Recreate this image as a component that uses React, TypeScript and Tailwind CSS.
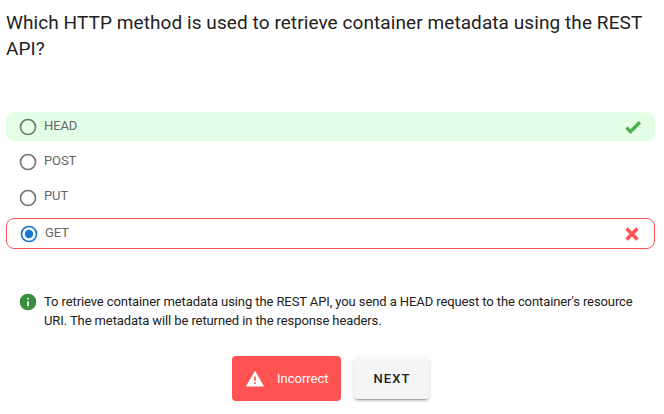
type IconProps = { d: string; className?: string };

const ICONS = {
  radioOff:
    "M12,20A8,8 0 0,1 4,12A8,8 0 0,1 12,4A8,8 0 0,1 20,12A8,8 0 0,1 12,20M12,2A10,10 0 0,0 2,12A10,10 0 0,0 12,22A10,10 0 0,0 22,12A10,10 0 0,0 12,2Z",
  radioOn:
    "M12,20A8,8 0 0,1 4,12A8,8 0 0,1 12,4A8,8 0 0,1 20,12A8,8 0 0,1 12,20M12,2A10,10 0 0,0 2,12A10,10 0 0,0 12,22A10,10 0 0,0 22,12A10,10 0 0,0 12,2M12,7A5,5 0 0,0 7,12A5,5 0 0,0 12,17A5,5 0 0,0 17,12A5,5 0 0,0 12,7Z",
  check: "M9,20.42L2.79,14.21L5.62,11.38L9,14.77L18.88,4.88L21.71,7.71L9,20.42Z",
  close:
    "M20 6.91L17.09 4L12 9.09L6.91 4L4 6.91L9.09 12L4 17.09L6.91 20L12 14.91L17.09 20L20 17.09L14.91 12L20 6.91Z",
  alert: "M13 14H11V9H13M13 18H11V16H13M1 21H23L12 2L1 21Z",
  info: "M13,9H11V7H13M13,17H11V11H13M12,2A10,10 0 0,0 2,12A10,10 0 0,0 12,22A10,10 0 0,0 22,12A10,10 0 0,0 12,2Z",
};

function Icon({ d, className = "" }: IconProps) {
  return (
    <svg viewBox="0 0 24 24" className={`size-5 shrink-0 fill-current ${className}`}>
      <path d={d} />
    </svg>
  );
}

type OptionProps = {
  label: string;
  className: string;
  labelClass?: string;
  selected?: boolean;
  mark?: "check" | "close";
};

function Option({ label, className, labelClass = "", selected, mark }: OptionProps) {
  return (
    <label className={`flex items-start rounded-lg pl-3 ${className}`}>
      <Icon
        d={selected ? ICONS.radioOn : ICONS.radioOff}
        className={selected ? "text-[#1976d2]" : "text-[#757575]"}
      />
      <span className={`ml-1.5 text-[13px] leading-[18px] tracking-[-0.1px] text-[#666666] ${labelClass}`}>
        {label}
      </span>
      {mark && (
        <Icon
          d={ICONS[mark]}
          className={mark === "check" ? "ml-auto text-[#4caf50]" : "ml-auto text-[#ff5252]"}
        />
      )}
    </label>
  );
}

export default function App() {
  return (
    <main className="h-[414px] w-[664px] overflow-hidden bg-white pr-[9px] pl-1.5 font-['Roboto',sans-serif] text-[#212121]">
      <h1 className="h-28 pt-[10px] text-[19px] leading-[26px] tracking-[0.08px]">
        Which HTTP method is used to retrieve container metadata using the REST API?
      </h1>

      <div className="flex flex-col">
        <Option label="HEAD" mark="check" className="h-[29px] bg-[#e3ffe6] pt-[5px] pr-3" />
        <Option label="POST" className="h-[35px] pt-[11px]" />
        <Option label="PUT" className="h-[42px] pt-3" labelClass="-mt-px" />
        <Option
          label="GET"
          selected
          mark="close"
          className="h-[31px] border border-[#ff5252] pt-[5px] pr-3"
        />
      </div>

      <div className="flex h-[107px] pt-[43px] pl-3">
        <Icon d={ICONS.info} className="text-[#388e3c]" />
        <p className="ml-1.5 w-[600px] text-[13px] leading-[19px] tracking-[-0.095px]">
          To retrieve container metadata using the REST API, you send a HEAD request to the
          container's resource URI. The metadata will be returned in the response headers.
        </p>
      </div>

      <div className="flex items-center pl-[226px]">
        <div className="flex h-[45px] w-[109px] items-center rounded bg-[#ff5252] pl-[13px] text-[13px] text-white">
          <Icon d={ICONS.alert} />
          <span className="ml-3">Incorrect</span>
        </div>
        <button className="ml-[13px] h-[41px] w-[75px] rounded bg-[#f5f5f5] pl-px text-[13px] font-medium tracking-[1.1px] shadow-[0_3px_1px_-2px_rgba(0,0,0,0.2),0_2px_2px_0_rgba(0,0,0,0.14),0_1px_5px_0_rgba(0,0,0,0.12)]">
          NEXT
        </button>
      </div>
    </main>
  );
}
